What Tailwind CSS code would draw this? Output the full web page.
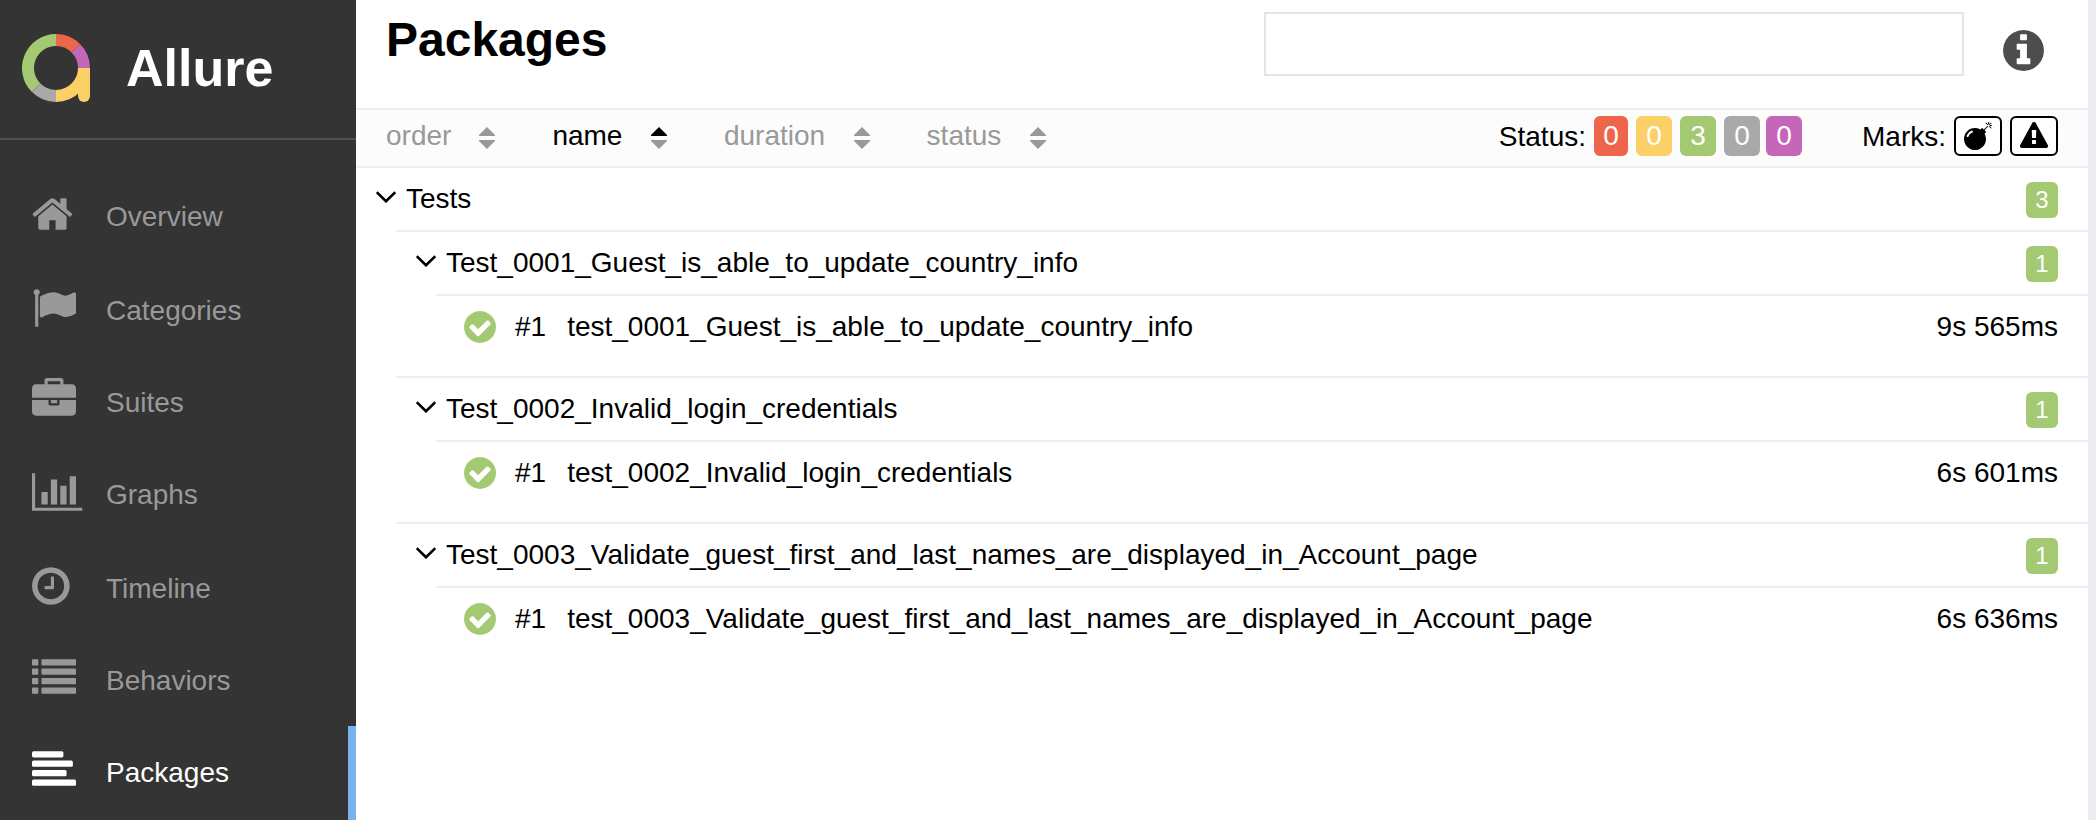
<!DOCTYPE html>
<html lang="en">
<head>
<meta charset="utf-8">
<title>Allure – Packages</title>
<script src="https://cdn.jsdelivr.net/npm/@tailwindcss/browser@4"></script>
</head>
<body class="flex h-[820px] w-[2096px] overflow-hidden bg-white font-['Liberation_Sans',Arial,sans-serif] text-[28px] leading-[32px] text-black">

<aside class="h-full w-[356px] shrink-0 overflow-hidden bg-[#343434] text-[#999999]">
  <div class="flex h-[140px] border-b-2 border-[#505050] pl-[22px] pt-[34px]">
    <svg class="size-[68px] shrink-0" viewBox="0 0 68 68" fill="none" stroke-width="12">
      <path stroke="#a3ca72" d="M34 6A28 28 0 0 0 14.2 53.8"/>
      <path stroke="#a9a9a9" d="M14.2 53.8A28 28 0 0 0 34 62"/>
      <path stroke="#ed664b" d="M34 6A28 28 0 0 1 53.8 14.2"/>
      <path stroke="#c567b8" d="M53.8 14.2A28 28 0 0 1 62 34"/>
      <path stroke="#fbd167" d="M62 34A28 28 0 0 1 34 62"/>
      <path fill="#fbd167" d="M56 34H68V62A6 6 0 0 1 56 62Z"/>
    </svg>
    <span class="ml-[36px] mt-[4px] text-[52px] leading-[60px] font-bold text-white">Allure</span>
  </div>
  <nav class="pt-[30px]">
    <a class="flex h-[94px] items-start pl-8">
      <svg class="mt-[22px] size-11 shrink-0 overflow-visible" viewBox="64 0 1792 1792" fill="currentColor"><path d="M1472 992v480q0 26-19 45t-45 19h-384v-384h-256v384h-384q-26 0-45-19t-19-45v-480q0-1 .5-3t.5-3l575-474 575 474q1 2 1 6zm223-69l-62 74q-8 9-21 11h-3q-13 0-21-7l-692-577-692 577q-12 8-24 7-13-2-21-11l-62-74q-8-10-7-23.5t11-21.5l719-599q32-26 76-26t76 26l244 204v-195q0-14 9-23t23-9h192q14 0 23 9t9 23v408l219 182q10 8 11 21.5t-7 23.5z"/></svg>
      <span class="ml-[30px] mt-[31px]">Overview</span>
    </a>
    <a class="flex h-[92px] items-start pl-8">
      <svg class="mt-[22px] size-11 shrink-0" viewBox="0 0 1792 1792" fill="currentColor"><path d="M320 256q0 72-64 110v1266q0 13-9.5 22.5t-22.5 9.5h-64q-13 0-22.5-9.5t-9.5-22.5v-1266q-64-38-64-110 0-53 37.5-90.5t90.5-37.5 90.5 37.5 37.5 90.5zm1472 64v763q0 25-12.5 38.5t-39.5 27.5q-215 116-369 116-61 0-123.5-22t-108.5-48-115.5-48-142.5-22q-192 0-464 146-17 9-33 9-26 0-45-19t-19-45v-742q0-32 31-55 21-14 79-43 236-120 421-120 107 0 200 29t219 88q38 19 88 19 54 0 117.5-21t110-47 88-47 54.5-21q26 0 45 19t19 45z"/></svg>
      <span class="ml-[30px] mt-[31px]">Categories</span>
    </a>
    <a class="flex h-[92px] items-start pl-8">
      <svg class="mt-[22px] size-11 shrink-0" viewBox="0 0 1792 1792" fill="currentColor"><path d="M640 256h512v-128h-512v128zm1152 640v480q0 66-47 113t-113 47h-1472q-66 0-113-47t-47-113v-480h672v160q0 26 19 45t45 19h320q26 0 45-19t19-45v-160h672zm-768 0v128h-256v-128h256zm768-480v384h-1792v-384q0-66 47-113t113-47h352v-160q0-40 28-68t68-28h576q40 0 68 28t28 68v160h352q66 0 113 47t47 113z"/></svg>
      <span class="ml-[30px] mt-[31px]">Suites</span>
    </a>
    <a class="flex h-[94px] items-start pl-8">
      <svg class="mt-[22px] size-11 shrink-0 overflow-visible" viewBox="0 0 1792 1792" fill="currentColor"><path d="M640 896v512h-256v-512h256zm384-512v1024h-256v-1024h256zm1024 1152v128h-2048v-1536h128v1408h1920zm-640-896v768h-256v-768h256zm384-384v1152h-256v-1152h256z"/></svg>
      <span class="ml-[30px] mt-[31px]">Graphs</span>
    </a>
    <a class="flex h-[92px] items-start pl-8">
      <svg class="mt-[22px] size-11 shrink-0" viewBox="128 0 1792 1792" fill="currentColor"><path d="M1024 544v448q0 14-9 23t-23 9h-320q-14 0-23-9t-9-23v-64q0-14 9-23t23-9h224v-352q0-14 9-23t23-9h64q14 0 23 9t9 23zm416 352q0-148-73-273t-198-198-273-73-273 73-198 198-73 273 73 273 198 198 273 73 273-73 198-198 73-273zm224 0q0 209-103 385.5t-279.5 279.5-385.5 103-385.5-103-279.5-279.5-103-385.5 103-385.5 279.5-279.5 385.5-103 385.5 103 279.5 279.5 103 385.5z"/></svg>
      <span class="ml-[30px] mt-[31px]">Timeline</span>
    </a>
    <a class="flex h-[92px] items-start pl-8">
      <svg class="mt-[22px] size-11 shrink-0" viewBox="0 0 1792 1792" fill="currentColor"><rect y="128" width="256" height="256" rx="32"/><rect x="384" y="128" width="1408" height="256" rx="32"/><rect y="512" width="256" height="256" rx="32"/><rect x="384" y="512" width="1408" height="256" rx="32"/><rect y="896" width="256" height="256" rx="32"/><rect x="384" y="896" width="1408" height="256" rx="32"/><rect y="1280" width="256" height="256" rx="32"/><rect x="384" y="1280" width="1408" height="256" rx="32"/></svg>
      <span class="ml-[30px] mt-[31px]">Behaviors</span>
    </a>
    <a class="flex h-[94px] items-start border-r-8 border-[#78b3ee] pl-8 text-white">
      <svg class="mt-[22px] size-11 shrink-0" viewBox="0 0 1792 1792" fill="currentColor"><rect y="128" width="1280" height="256" rx="64"/><rect y="512" width="1664" height="256" rx="64"/><rect y="896" width="1408" height="256" rx="64"/><rect y="1280" width="1792" height="256" rx="64"/></svg>
      <span class="ml-[30px] mt-[31px]">Packages</span>
    </a>
  </nav>
</aside>

<main class="h-full w-[1732px] shrink-0">
  <header class="flex h-[108px] items-start pl-[30px]">
    <h1 class="mt-[13px] w-[878px] text-[48px] leading-[54px] font-bold">Packages</h1>
    <div class="mt-3 h-16 w-[700px] border-2 border-[#e5e5e5] bg-white"></div>
    <svg class="ml-[39px] mt-[30px] size-[41px]" viewBox="128 128 1536 1536" fill="#4d4d4d"><path d="M1152 1376v-160q0-14-9-23t-23-9h-96v-512q0-14-9-23t-23-9h-320q-14 0-23 9t-9 23v160q0 14 9 23t23 9h96v320h-96q-14 0-23 9t-9 23v160q0 14 9 23t23 9h448q14 0 23-9t9-23zm-128-896v-160q0-14-9-23t-23-9h-192q-14 0-23 9t-9 23v160q0 14 9 23t23 9h192q14 0 23-9t9-23zm640 416q0 209-103 385.5t-279.5 279.5-385.5 103-385.5-103-279.5-279.5-103-385.5 103-385.5 279.5-279.5 385.5-103 385.5 103 279.5 279.5 103 385.5z"/></svg>
  </header>

  <div class="flex h-[60px] items-start border-y-2 border-[#eeeeee] bg-[#fcfcfc] pl-[30px] pr-[30px] text-[#999999]">
    <div class="mt-[10px] flex gap-[57px]">
      <div class="flex items-start gap-[28px]">order<svg class="mt-[7px] h-[22px] w-4" viewBox="0 0 16 22" fill="#999999"><path d="M8 0L16 8V9H0V8Z"/><path d="M8 22L16 14V13H0V14Z"/></svg></div>
      <div class="flex items-start gap-[28.5px] text-black">name<svg class="mt-[7px] h-[22px] w-4" viewBox="0 0 16 22" fill="#999999"><path fill="#000" d="M8 0L16 8V9H0V8Z"/><path d="M8 22L16 14V13H0V14Z"/></svg></div>
      <div class="flex items-start gap-[28.5px]">duration<svg class="mt-[7px] h-[22px] w-4" viewBox="0 0 16 22" fill="#999999"><path d="M8 0L16 8V9H0V8Z"/><path d="M8 22L16 14V13H0V14Z"/></svg></div>
      <div class="flex items-start gap-[28.5px]">status<svg class="mt-[7px] h-[22px] w-4" viewBox="0 0 16 22" fill="#999999"><path d="M8 0L16 8V9H0V8Z"/><path d="M8 22L16 14V13H0V14Z"/></svg></div>
    </div>
    <div class="ml-auto mt-[6px] flex h-10 items-start leading-[41px] text-black">
      <span>Status:</span>
      <div class="ml-2 flex text-center leading-[40px] text-white">
        <span class="mr-2 w-[34px] rounded-md bg-[#ed664b]">0</span>
        <span class="mr-2 w-9 rounded-md bg-[#fbd167]">0</span>
        <span class="mr-2 w-9 rounded-md bg-[#a3ca72]">3</span>
        <span class="mr-1.5 w-9 rounded-md bg-[#a9a9a9]">0</span>
        <span class="w-9 rounded-md bg-[#c567b8]">0</span>
      </div>
      <span class="ml-[60px]">Marks:</span>
      <div class="ml-2 flex gap-2">
        <span class="flex h-10 w-12 items-start justify-center rounded-md border-2 border-black bg-white pt-1"><svg class="size-7" viewBox="0 0 1792 1792"><path d="M571 589q-10-25-34-35t-49 0q-108 44-191 127t-127 191q-10 25 0 49t35 34q13 5 24 5 42 0 60-40 34-84 98.5-148.5t148.5-98.5q25-11 35-35t0-49zm942-356l46 46-244 243 68 68q19 19 19 45.5t-19 45.5l-64 64q89 161 89 343 0 143-55.5 273.5t-150 225-225 150-273.5 55.5-273.5-55.5-225-150-150-225-55.5-273.5 55.5-273.5 150-225 225-150 273.5-55.5q182 0 343 89l64-64q19-19 45.5-19t45.5 19l68 68zm8-56q-10 10-22 10-13 0-23-10l-91-90q-9-10-9-23t9-23q10-9 23-9t23 9l90 91q10 9 10 22.5t-10 22.5zm230 230q-11 9-23 9t-23-9l-90-91q-10-9-10-22.5t10-22.5q9-10 22.5-10t22.5 10l91 90q9 10 9 23t-9 23zm41-183q0 14-9 23t-23 9h-96q-14 0-23-9t-9-23 9-23 23-9h96q14 0 23 9t9 23zm-192-192v96q0 14-9 23t-23 9-23-9-9-23v-96q0-14 9-23t23-9 23 9 9 23zm151 55l-91 90q-10 10-22 10-13 0-23-10-10-9-10-22.5t10-22.5l90-91q10-9 23-9t23 9q9 10 9 23t-9 23z"/></svg></span>
        <span class="flex h-10 w-12 items-start justify-center rounded-md border-2 border-black bg-white pt-1"><svg class="size-7" viewBox="0 0 1792 1792"><path d="M1024 1375v-190q0-14-9.5-23.5t-22.5-9.5h-192q-13 0-22.5 9.5t-9.5 23.5v190q0 14 9.5 23.5t22.5 9.5h192q13 0 22.5-9.5t9.5-23.5zm-2-374l18-459q0-12-10-19-13-11-24-11h-220q-11 0-24 11-10 7-10 21l17 457q0 10 10 16.5t24 6.5h185q14 0 23.5-6.5t10.5-16.5zm-14-934l768 1408q35 63-2 126-17 29-46.5 46t-63.5 17h-1536q-34 0-63.5-17t-46.5-46q-37-63-2-126l768-1408q17-31 47-49t65-18 65 18 47 49z"/></svg></span>
      </div>
    </div>
  </div>

  <section>
    <div class="flex h-[62px] items-start pl-5 pr-[30px]">
      <svg class="mt-[23px] h-3 w-5" viewBox="0 0 20 12" fill="none" stroke="#000" stroke-width="2.6"><path d="M.7 1.2L10 10.3L19.3 1.2"/></svg>
      <span class="ml-2.5 mt-[15px]">Tests</span>
      <span class="ml-auto mt-[14px] h-9 w-8 rounded-md bg-[#a3ca72] text-center text-[24px] leading-[36px] text-white">3</span>
    </div>
    <div class="ml-10">
      <div class="flex h-16 items-start border-t-2 border-[#eeeeee] pl-5 pr-[30px]">
        <svg class="mt-[23px] h-3 w-5" viewBox="0 0 20 12" fill="none" stroke="#000" stroke-width="2.6"><path d="M.7 1.2L10 10.3L19.3 1.2"/></svg>
        <span class="ml-2.5 mt-[15px]">Test_0001_Guest_is_able_to_update_country_info</span>
        <span class="ml-auto mt-[14px] h-9 w-8 rounded-md bg-[#a3ca72] text-center text-[24px] leading-[36px] text-white">1</span>
      </div>
      <div class="ml-10 flex h-[82px] items-start border-t-2 border-[#eeeeee] pl-7 pr-[30px]">
        <svg class="mt-[15px] size-8" viewBox="128 128 1536 1536" fill="#a3ca72"><path d="M1412 734q0-28-18-46l-91-90q-19-19-45-19t-45 19l-408 407-226-226q-19-19-45-19t-45 19l-91 90q-18 18-18 46 0 27 18 45l362 362q19 19 45 19 27 0 46-19l543-543q18-18 18-45zm252 162q0 209-103 385.5t-279.5 279.5-385.5 103-385.5-103-279.5-279.5-103-385.5 103-385.5 279.5-279.5 385.5-103 385.5 103 279.5 279.5 103 385.5z"/></svg>
        <span class="ml-[19px] mt-[15px]">#1</span>
        <span class="ml-[21px] mt-[15px]">test_0001_Guest_is_able_to_update_country_info</span>
        <span class="ml-auto mt-[15px]">9s 565ms</span>
      </div>
      <div class="flex h-16 items-start border-t-2 border-[#eeeeee] pl-5 pr-[30px]">
        <svg class="mt-[23px] h-3 w-5" viewBox="0 0 20 12" fill="none" stroke="#000" stroke-width="2.6"><path d="M.7 1.2L10 10.3L19.3 1.2"/></svg>
        <span class="ml-2.5 mt-[15px]">Test_0002_Invalid_login_credentials</span>
        <span class="ml-auto mt-[14px] h-9 w-8 rounded-md bg-[#a3ca72] text-center text-[24px] leading-[36px] text-white">1</span>
      </div>
      <div class="ml-10 flex h-[82px] items-start border-t-2 border-[#eeeeee] pl-7 pr-[30px]">
        <svg class="mt-[15px] size-8" viewBox="128 128 1536 1536" fill="#a3ca72"><path d="M1412 734q0-28-18-46l-91-90q-19-19-45-19t-45 19l-408 407-226-226q-19-19-45-19t-45 19l-91 90q-18 18-18 46 0 27 18 45l362 362q19 19 45 19 27 0 46-19l543-543q18-18 18-45zm252 162q0 209-103 385.5t-279.5 279.5-385.5 103-385.5-103-279.5-279.5-103-385.5 103-385.5 279.5-279.5 385.5-103 385.5 103 279.5 279.5 103 385.5z"/></svg>
        <span class="ml-[19px] mt-[15px]">#1</span>
        <span class="ml-[21px] mt-[15px]">test_0002_Invalid_login_credentials</span>
        <span class="ml-auto mt-[15px]">6s 601ms</span>
      </div>
      <div class="flex h-16 items-start border-t-2 border-[#eeeeee] pl-5 pr-[30px]">
        <svg class="mt-[23px] h-3 w-5" viewBox="0 0 20 12" fill="none" stroke="#000" stroke-width="2.6"><path d="M.7 1.2L10 10.3L19.3 1.2"/></svg>
        <span class="ml-2.5 mt-[15px]">Test_0003_Validate_guest_first_and_last_names_are_displayed_in_Account_page</span>
        <span class="ml-auto mt-[14px] h-9 w-8 rounded-md bg-[#a3ca72] text-center text-[24px] leading-[36px] text-white">1</span>
      </div>
      <div class="ml-10 flex h-[82px] items-start border-t-2 border-[#eeeeee] pl-7 pr-[30px]">
        <svg class="mt-[15px] size-8" viewBox="128 128 1536 1536" fill="#a3ca72"><path d="M1412 734q0-28-18-46l-91-90q-19-19-45-19t-45 19l-408 407-226-226q-19-19-45-19t-45 19l-91 90q-18 18-18 46 0 27 18 45l362 362q19 19 45 19 27 0 46-19l543-543q18-18 18-45zm252 162q0 209-103 385.5t-279.5 279.5-385.5 103-385.5-103-279.5-279.5-103-385.5 103-385.5 279.5-279.5 385.5-103 385.5 103 279.5 279.5 103 385.5z"/></svg>
        <span class="ml-[19px] mt-[15px]">#1</span>
        <span class="ml-[21px] mt-[15px]">test_0003_Validate_guest_first_and_last_names_are_displayed_in_Account_page</span>
        <span class="ml-auto mt-[15px]">6s 636ms</span>
      </div>
    </div>
  </section>
</main>
<div class="h-full w-2 shrink-0 bg-[#ecedf0]"></div>
</body>
</html>
